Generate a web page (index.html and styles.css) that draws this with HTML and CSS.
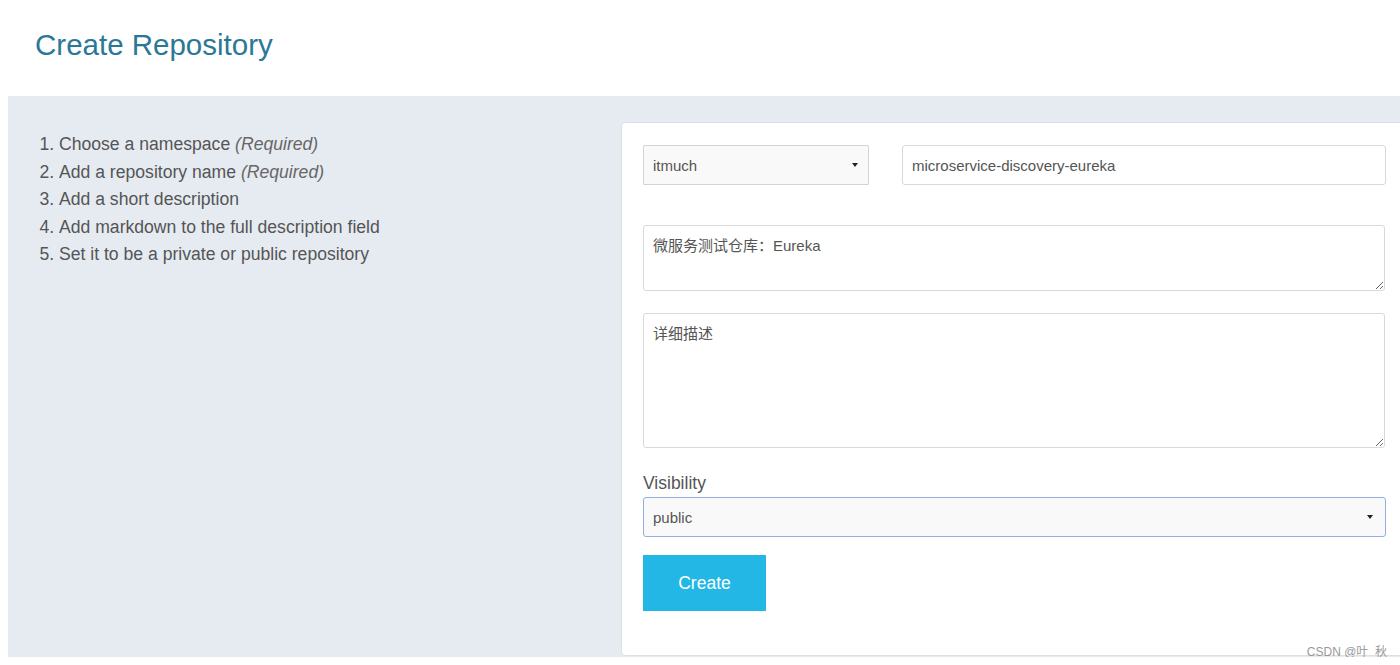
FILE: index.html
```html
<!DOCTYPE html>
<html lang="en">
<head>
<meta charset="utf-8">
<title>Create Repository</title>
<link rel="stylesheet" href="styles.css">
</head>
<body>
<header class="page-header">
  <h1 class="title">Create Repository</h1>
</header>
<main class="content">
  <section class="steps">
    <ol class="step-list">
      <li>Choose a namespace <em>(Required)</em></li>
      <li>Add a repository name <em>(Required)</em></li>
      <li>Add a short description</li>
      <li>Add markdown to the full description field</li>
      <li>Set it to be a private or public repository</li>
    </ol>
  </section>
  <section class="card">
    <div class="row">
      <div class="select ns-select"><span class="select-value">itmuch</span><span class="caret"></span></div>
      <input class="field name-input" type="text" value="microservice-discovery-eureka">
    </div>
    <textarea class="field short-desc">微服务测试仓库：Eureka</textarea>
    <textarea class="field full-desc">详细描述</textarea>
    <label class="label">Visibility</label>
    <div class="select vis-select"><span class="select-value">public</span><span class="caret"></span></div>
    <button class="btn-create" type="button">Create</button>
  </section>
  <div class="watermark">CSDN @叶&nbsp;&nbsp;秋</div>
</main>
</body>
</html>
```
FILE: styles.css
```css
html, body {
  margin: 0;
  padding: 0;
  overflow: hidden;
  background: #ffffff;
  font-family: "Liberation Sans", Arial, "Noto Sans CJK SC", sans-serif;
}
.page-header {
  height: 96px;
  box-sizing: border-box;
  padding: 27px 0 0 35px;
}
.title {
  margin: 0;
  font-size: 29.5px;
  font-weight: normal;
  line-height: 36px;
  color: #2b7896;
}
.content {
  position: relative;
  display: flex;
  margin-left: 8px;
  height: 561px;
  background: #e6ebf2;
  padding-top: 26px;
  box-sizing: border-box;
}
.steps {
  width: 613px;
  flex: none;
}
.step-list {
  margin: 0;
  padding: 9px 0 0 51px;
  font-size: 17.6px;
  line-height: 27.5px;
  color: #555;
}
.step-list em {
  font-style: italic;
  color: #666;
}
.card {
  flex: none;
  width: 786px;
  height: 534px;
  box-sizing: border-box;
  background: #fff;
  border: 1px solid #dcdfe3;
  border-radius: 4px;
  padding: 22px 0 0 21px;
  display: flex;
  flex-direction: column;
}
.row {
  display: flex;
  gap: 33px;
}
.field, .select {
  box-sizing: border-box;
  border: 1px solid #d9d9d9;
  border-radius: 3px;
  font-family: "Liberation Sans", Arial, "Noto Sans CJK SC", sans-serif;
  font-size: 15px;
  color: #555;
  background: #fff;
  margin: 0;
}
.select {
  height: 40px;
  display: flex;
  align-items: center;
  justify-content: space-between;
  padding: 0 10px 0 9px;
  background: #f9f9f9;
  border-color: #d4d4d4;
  border-radius: 1px;
}
.caret {
  width: 0;
  height: 0;
  border-left: 3px solid transparent;
  border-right: 3px solid transparent;
  border-top: 4px solid #222;
}
.ns-select {
  width: 226px;
}
.name-input {
  width: 484px;
  height: 40px;
  padding: 0 9px;
  outline: none;
}
.short-desc, .full-desc {
  display: block;
  width: 742px;
  padding: 10px 9px;
  line-height: 20px;
  outline: none;
  resize: vertical;
}
.short-desc {
  margin-top: 40px;
  height: 66px;
}
.full-desc {
  margin-top: 22px;
  height: 135px;
}
.label {
  margin-top: 24px;
  font-size: 17.5px;
  line-height: 22px;
  color: #555;
}
.vis-select {
  margin-top: 3px;
  width: 743px;
  border-color: #94aee3;
  border-radius: 3px;
  padding-right: 12px;
}
.btn-create {
  margin-top: 18px;
  width: 123px;
  height: 56px;
  border: none;
  background: #23b7e5;
  color: #fff;
  font-family: "Liberation Sans", Arial, sans-serif;
  font-size: 17.5px;
  padding: 0;
  cursor: pointer;
}
.watermark {
  position: absolute;
  right: 13px;
  bottom: -2px;
  font-size: 12px;
  color: #999;
  font-family: "Liberation Sans", Arial, "Noto Sans CJK SC", sans-serif;
}
```
